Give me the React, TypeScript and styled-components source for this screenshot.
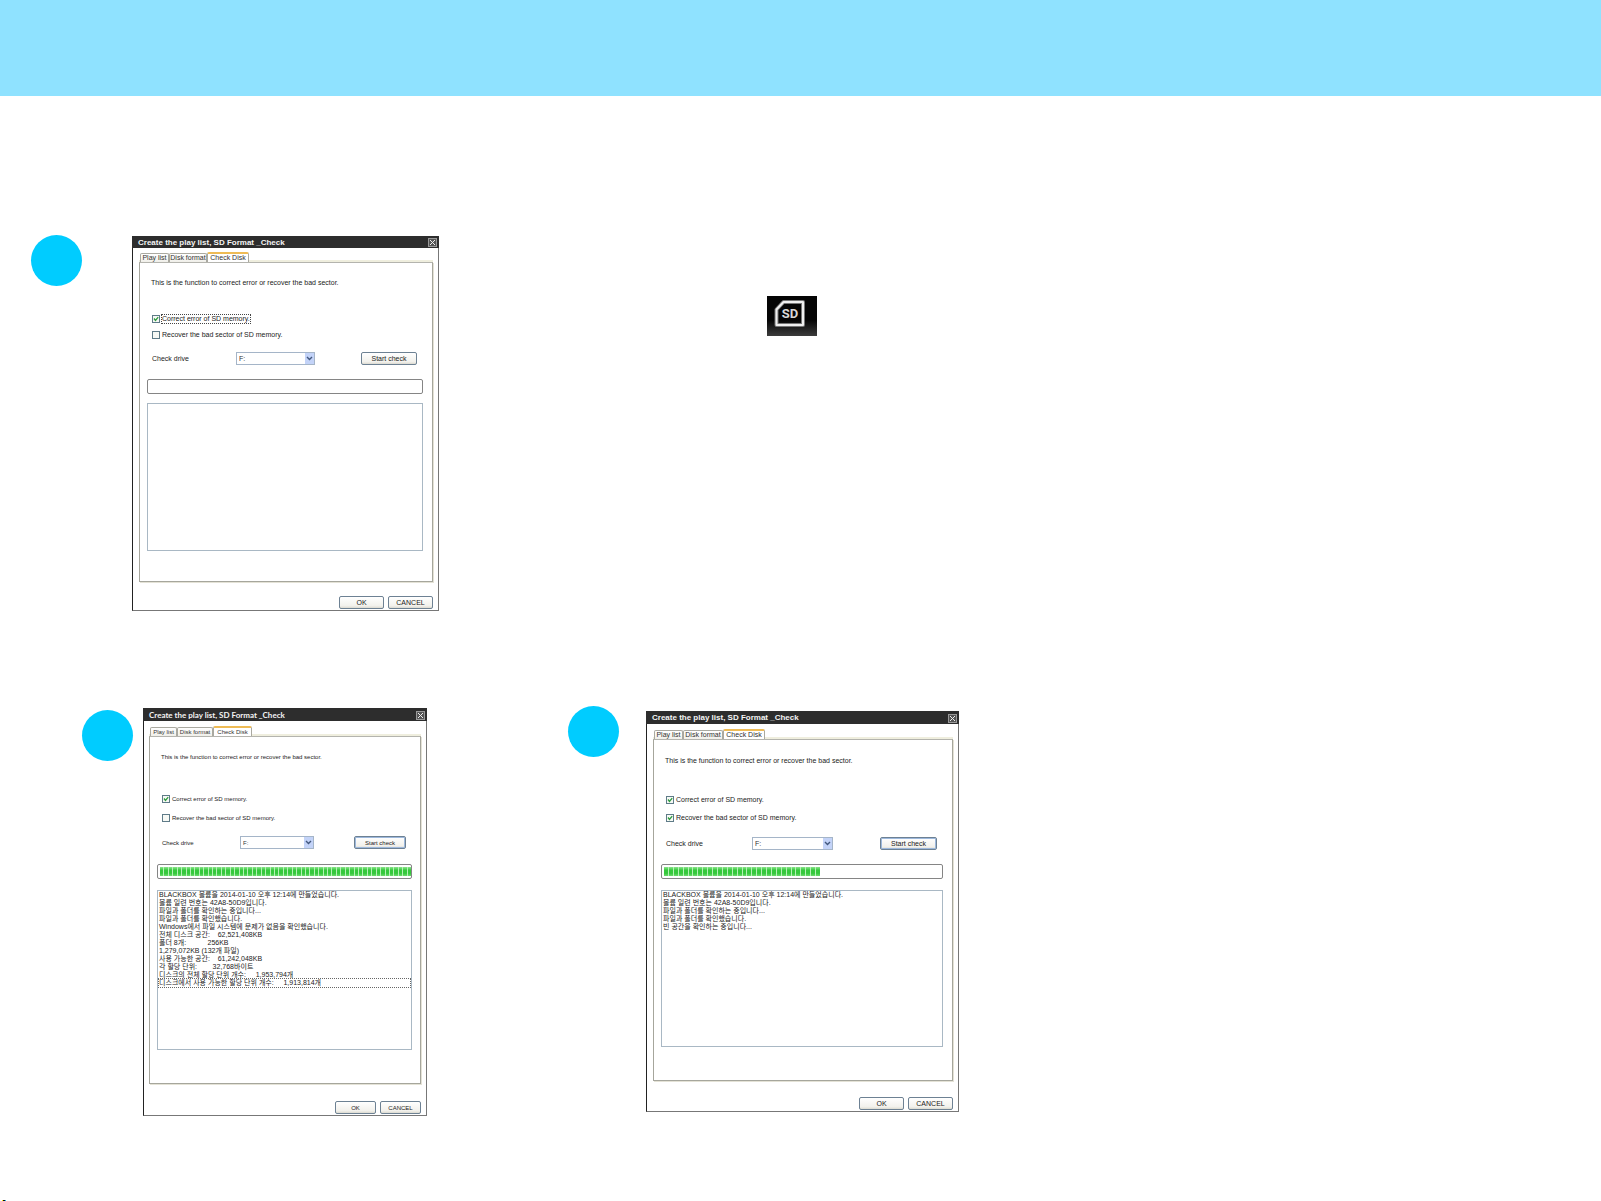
import React, { useId } from 'react';
import styled, { createGlobalStyle, css } from 'styled-components';

type Metrics = {
  width: number;
  titleHeight: number;
  textSize: number;
  titleFamily: string;
  tabWidths: number[];
  tabsTop: number;
  inset: number;
  padRight: number;
  introHeight: number;
  optionsGap: number;
  optionHeight: number;
  driveHeight: number;
  selectLeft: number;
  selectWidth: number;
  startWidth: number;
  progressGap: number;
  listGap: number;
  listHeight: number;
  panelFoot: number;
  actionsGap: number;
  actionWidth: number;
  chunks: number;
  filled: number;
};

const SANS = "'Liberation Sans', 'Noto Sans CJK KR', sans-serif";
const LATO = "Lato, 'Liberation Sans', 'Noto Sans CJK KR', sans-serif";

const idle: Metrics = {
  width: 307, titleHeight: 12, textSize: 7, titleFamily: SANS,
  tabWidths: [29, 38, 42], tabsTop: 4, inset: 6, padRight: 9, introHeight: 39,
  optionsGap: 9, optionHeight: 16, driveHeight: 31,
  selectLeft: 84, selectWidth: 79, startWidth: 56, progressGap: 5, listGap: 9,
  listHeight: 148, panelFoot: 30, actionsGap: 14, actionWidth: 45, chunks: 56, filled: 0,
};

const finished: Metrics = {
  width: 284, titleHeight: 13, textSize: 6, titleFamily: LATO,
  tabWidths: [27, 36, 39], tabsTop: 5, inset: 5, padRight: 8, introHeight: 41,
  optionsGap: 11, optionHeight: 19, driveHeight: 31,
  selectLeft: 78, selectWidth: 74, startWidth: 52, progressGap: 6, listGap: 11,
  listHeight: 160, panelFoot: 33, actionsGap: 17, actionWidth: 41, chunks: 57, filled: 57,
};

const running: Metrics = {
  width: 313, titleHeight: 13, textSize: 7, titleFamily: SANS,
  tabWidths: [29, 40, 42], tabsTop: 5, inset: 6, padRight: 9, introHeight: 41,
  optionsGap: 10, optionHeight: 18, driveHeight: 33,
  selectLeft: 86, selectWidth: 81, startWidth: 57, progressGap: 4, listGap: 11,
  listHeight: 157, panelFoot: 33, actionsGap: 16, actionWidth: 45, chunks: 57, filled: 32,
};

const GlobalStyle = createGlobalStyle`
  *, *::before, *::after { box-sizing: border-box; }
  body { margin: 0; background: #fff; font-family: ${SANS}; color: #222; }
`;

const Page = styled.div`
  display: flex;
  flex-direction: column;
  min-height: 100vh;
`;

const Banner = styled.header`
  height: 96px;
  background: #8fe2ff;
`;

const Steps = styled.main`
  flex: 1;
  display: flex;
  flex-direction: column;
  gap: 95px;
  padding-top: 139px;
`;

const StepRow = styled.section<{ $indent: number }>`
  display: flex;
  align-items: flex-start;
  padding-left: ${(p) => p.$indent}px;
`;

const Slot = styled.div<{ $before: number; $top?: number }>`
  flex: none;
  margin-left: ${(p) => p.$before}px;
  padding-top: ${(p) => p.$top ?? 0}px;
`;

const Bullet = styled.div`
  width: 51px;
  height: 51px;
  border-radius: 50%;
  background: #00ccff;
`;

const SdTile = styled.div`
  width: 50px;
  height: 40px;
  background: linear-gradient(#050505 0 60%, #3c3c3c);
  svg { display: block; }
`;

const PrintMark = styled.footer`
  width: 4px;
  height: 1px;
  margin-left: 2px;
  background: linear-gradient(90deg, #ffee00 0 1px, #111 1px 3px, #18b4e8 3px);
`;

const Window = styled.article<{ $m: Metrics }>`
  display: flex;
  flex-direction: column;
  width: ${(p) => p.$m.width}px;
  padding-bottom: 1px;
  border: 1px solid #777;
  border-left-color: #222;
  border-top: 0;
  background: #fff;
  font-family: ${SANS};
  font-size: ${(p) => p.$m.textSize}px;
  line-height: 8px;
`;

const TitleBar = styled.header<{ $m: Metrics }>`
  display: flex;
  align-items: center;
  justify-content: space-between;
  height: ${(p) => p.$m.titleHeight}px;
  margin: 0 -1px;
  padding: 1px 2px 0 6px;
  background: #2d2d2d;
`;

const Title = styled.h2<{ $m: Metrics }>`
  margin: 0;
  color: #f4f4f4;
  font: bold 8px/12px ${(p) => p.$m.titleFamily};
`;

const CloseButton = styled.button`
  display: flex;
  width: 9px;
  height: 9px;
  padding: 0;
  border: 1px solid #999;
  background: #555;
  svg { display: block; width: 7px; height: 7px; }
`;

const Tabs = styled.div<{ $m: Metrics }>`
  display: flex;
  align-items: flex-end;
  height: 10px;
  margin: ${(p) => p.$m.tabsTop}px 5px 0 ${(p) => p.$m.inset}px;
  padding-left: 1px;
  box-shadow: inset 0 -2px #efeede;
`;

const Tab = styled.button<{ $active: boolean; $width: number }>`
  width: ${(p) => p.$width}px;
  height: 9px;
  padding: 0;
  border: 1px solid #aaa9a0;
  border-bottom: 0;
  border-radius: 2px 2px 0 0;
  background: linear-gradient(#fff, #f0efe9);
  color: #333;
  font: inherit;
  white-space: nowrap;
  ${(p) => p.$active && css`
    height: 11px;
    margin-bottom: -1px;
    padding-bottom: 2px;
    border-top: 2px solid #eebb55;
    background: #fff;
  `}
`;

const Panel = styled.div<{ $m: Metrics }>`
  display: flex;
  flex-direction: column;
  margin: 0 5px 0 ${(p) => p.$m.inset}px;
  padding: 0 ${(p) => p.$m.padRight}px ${(p) => p.$m.panelFoot}px 7px;
  border: 1px solid #a6a69c;
  border-top-color: #b4b4ae;
  box-shadow: 1px 1px #e4e2d6;
`;

const Description = styled.p<{ $m: Metrics }>`
  margin: 0 0 0 4px;
  line-height: ${(p) => p.$m.introHeight}px;
  white-space: nowrap;
`;

const Options = styled.div<{ $m: Metrics }>`
  display: flex;
  flex-direction: column;
  margin: ${(p) => p.$m.optionsGap}px 0 0 5px;
`;

const Option = styled.label<{ $m: Metrics }>`
  display: flex;
  align-items: center;
  gap: 2px;
  height: ${(p) => p.$m.optionHeight}px;
`;

const OptionText = styled.span<{ $focused?: boolean }>`
  line-height: 8px;
  white-space: nowrap;
  outline: ${(p) => (p.$focused ? '1px dotted #444' : 'none')};
`;

const BoxWrap = styled.span`
  display: grid;
  width: 8px;
  height: 8px;
  > * { grid-area: 1 / 1; }
  svg { width: 8px; height: 8px; pointer-events: none; }
`;

const Box = styled.input`
  appearance: none;
  width: 8px;
  height: 8px;
  margin: 0;
  border: 1px solid #5f7b88;
  background: #f7f9f5;
`;

const DriveRow = styled.div<{ $m: Metrics }>`
  display: grid;
  grid-template-columns: ${(p) => p.$m.selectLeft}px ${(p) => p.$m.selectWidth}px 1fr;
  align-items: center;
  height: ${(p) => p.$m.driveHeight}px;
  padding: 0 6px 0 5px;
`;

const SelectWrap = styled.span`
  display: grid;
  > * { grid-area: 1 / 1; }
  svg { justify-self: end; align-self: center; margin-right: 1px; pointer-events: none; }
`;

const Select = styled.select`
  appearance: none;
  width: 100%;
  height: 13px;
  padding: 0 2px;
  border: 1px solid #a5b5c8;
  border-radius: 0;
  background: #fff;
  color: #333;
  font: inherit;
`;

const PushButton = styled.button<{ $width: number; $strong?: boolean }>`
  justify-self: end;
  width: ${(p) => p.$width}px;
  height: 13px;
  padding: 0;
  border: 1px solid #6d8193;
  border-radius: 2px;
  background: linear-gradient(#fff, #f2f1ec 80%, #dcdad0);
  box-shadow: ${(p) => (p.$strong ? 'inset 0 0 0 1px #9db8dc' : 'none')};
  color: #222;
  font: inherit;
  line-height: 10px;
`;

const Progress = styled.div<{ $m: Metrics }>`
  display: flex;
  height: 15px;
  margin-top: ${(p) => p.$m.progressGap}px;
  padding: 2px 0 2px 2px;
  border: 1px solid #858585;
  border-radius: 2px;
  background: #fff;
`;

const Fill = styled.div`
  display: flex;
  gap: 1px;
  background: #b5f2b5;
`;

const Chunk = styled.span`
  flex: 1;
  background: linear-gradient(#8ce58c, #35c83c 35% 70%, #6cda6c);
`;

const Log = styled.ul<{ $m: Metrics }>`
  height: ${(p) => p.$m.listHeight}px;
  margin: ${(p) => p.$m.listGap}px 0 0;
  padding: 0 1px;
  border: 1px solid #a9b8c4;
  list-style: none;
  font-size: 7px;
`;

const LogLine = styled.li<{ $focused: boolean }>`
  height: 8px;
  line-height: 8px;
  white-space: pre;
  outline: ${(p) => (p.$focused ? '1px dotted #666' : 'none')};
`;

const Actions = styled.div<{ $m: Metrics }>`
  display: flex;
  justify-content: flex-end;
  gap: 4px;
  margin: ${(p) => p.$m.actionsGap}px 5px 0;
`;

const Tick = () => (
  <svg viewBox="0 0 8 8" aria-hidden="true">
    <path d="M2 3.5 3.5 5.5 6.2 2.2" fill="none" stroke="#2c9b3c" strokeWidth="1.3" />
  </svg>
);

const SdIcon = () => (
  <svg width="50" height="40" viewBox="0 0 50 40" role="img" aria-label="SD">
    <path d="M16.5 6H36V29H9.5V13.5Z" fill="none" stroke="#777" strokeWidth="4" strokeLinejoin="round" />
    <path d="M16.5 6H36V29H9.5V13.5Z" fill="none" stroke="#f0f0f0" strokeWidth="2" strokeLinejoin="round" />
    <text x="23" y="22" textAnchor="middle" fontFamily="Roboto, sans-serif" fontWeight="bold" fontSize="13" fill="#d8d8d8">SD</text>
  </svg>
);

type DialogProps = {
  m: Metrics;
  correct: boolean;
  recover: boolean;
  labelFocused?: boolean;
  started?: boolean;
  log?: string[];
  focusedLine?: number;
};

function CheckBox({ m, text, checked, focused }: { m: Metrics; text: string; checked: boolean; focused?: boolean }) {
  const id = useId();
  return (
    <Option $m={m} htmlFor={id}>
      <BoxWrap>
        <Box id={id} type="checkbox" defaultChecked={checked} />
        {checked && <Tick />}
      </BoxWrap>
      <OptionText $focused={focused}>{text}</OptionText>
    </Option>
  );
}

function CheckDialog({ m, correct, recover, labelFocused, started, log = [], focusedLine = -1 }: DialogProps) {
  const driveId = useId();
  return (
    <Window $m={m}>
      <TitleBar $m={m}>
        <Title $m={m}>Create the play list, SD Format _Check</Title>
        <CloseButton type="button" aria-label="Close">
          <svg viewBox="0 0 7 7"><path d="M1 1 6 6M6 1 1 6" stroke="#eee" strokeWidth="1" /></svg>
        </CloseButton>
      </TitleBar>
      <Tabs $m={m} role="tablist">
        {['Play list', 'Disk format', 'Check Disk'].map((name, i) => (
          <Tab key={name} type="button" role="tab" aria-selected={i === 2} $active={i === 2} $width={m.tabWidths[i]}>{name}</Tab>
        ))}
      </Tabs>
      <Panel $m={m} role="tabpanel">
        <Description $m={m}>This is the function to correct error or recover the bad sector.</Description>
        <Options $m={m}>
          <CheckBox m={m} text="Correct error of SD memory." checked={correct} focused={labelFocused} />
          <CheckBox m={m} text="Recover the bad sector of SD memory." checked={recover} />
        </Options>
        <DriveRow $m={m}>
          <label htmlFor={driveId}>Check drive</label>
          <SelectWrap>
            <Select id={driveId} defaultValue="F:"><option>F:</option></Select>
            <svg width="9" height="11" viewBox="0 0 9 11" aria-hidden="true">
              <rect width="9" height="11" fill="#c3d3f8" />
              <path d="M2 4 4.5 6.5 7 4" fill="none" stroke="#43587e" strokeWidth="1.4" />
            </svg>
          </SelectWrap>
          <PushButton type="button" $width={m.startWidth} $strong={started}>Start check</PushButton>
        </DriveRow>
        <Progress $m={m} role="progressbar" aria-label="Check progress" aria-valuemin={0} aria-valuemax={m.chunks} aria-valuenow={m.filled}>
          <Fill style={{ width: `${(m.filled / m.chunks) * 100}%` }}>
            {Array.from({ length: m.filled }, (_, i) => <Chunk key={i} />)}
          </Fill>
        </Progress>
        <Log $m={m}>
          {log.map((line, i) => <LogLine key={i} $focused={i === focusedLine}>{line}</LogLine>)}
        </Log>
      </Panel>
      <Actions $m={m}>
        <PushButton type="button" $width={m.actionWidth}>OK</PushButton>
        <PushButton type="button" $width={m.actionWidth}>CANCEL</PushButton>
      </Actions>
    </Window>
  );
}

const finishedLog = [
  'BLACKBOX 볼륨을 2014-01-10 오후 12:14에 만들었습니다.',
  '볼륨 일련 번호는 42A8-50D9입니다.',
  '파일과 폴더를 확인하는 중입니다...',
  '파일과 폴더를 확인했습니다.',
  'Windows에서 파일 시스템에 문제가 없음을 확인했습니다.',
  '전체 디스크 공간:    62,521,408KB',
  '폴더 8개:           256KB',
  '1,279,072KB (132개 파일)',
  '사용 가능한 공간:    61,242,048KB',
  '각 할당 단위:        32,768바이트',
  '디스크의 전체 할당 단위 개수:     1,953,794개',
  '디스크에서 사용 가능한 할당 단위 개수:     1,913,814개',
];

const runningLog = [
  'BLACKBOX 볼륨을 2014-01-10 오후 12:14에 만들었습니다.',
  '볼륨 일련 번호는 42A8-50D9입니다.',
  '파일과 폴더를 확인하는 중입니다...',
  '파일과 폴더를 확인했습니다.',
  '빈 공간을 확인하는 중입니다...',
];

export default function App() {
  return (
    <Page>
      <GlobalStyle />
      <Banner />
      <Steps>
        <StepRow $indent={31}>
          <Bullet />
          <Slot $before={50} $top={1}>
            <CheckDialog m={idle} correct recover={false} labelFocused />
          </Slot>
          <Slot $before={328} $top={61}>
            <SdTile><SdIcon /></SdTile>
          </Slot>
        </StepRow>
        <StepRow $indent={82}>
          <Slot $before={0} $top={4}><Bullet /></Slot>
          <Slot $before={10} $top={2}>
            <CheckDialog m={finished} correct recover={false} started log={finishedLog} focusedLine={11} />
          </Slot>
          <Slot $before={141}><Bullet /></Slot>
          <Slot $before={27} $top={5}>
            <CheckDialog m={running} correct recover started log={runningLog} />
          </Slot>
        </StepRow>
      </Steps>
      <PrintMark />
    </Page>
  );
}
